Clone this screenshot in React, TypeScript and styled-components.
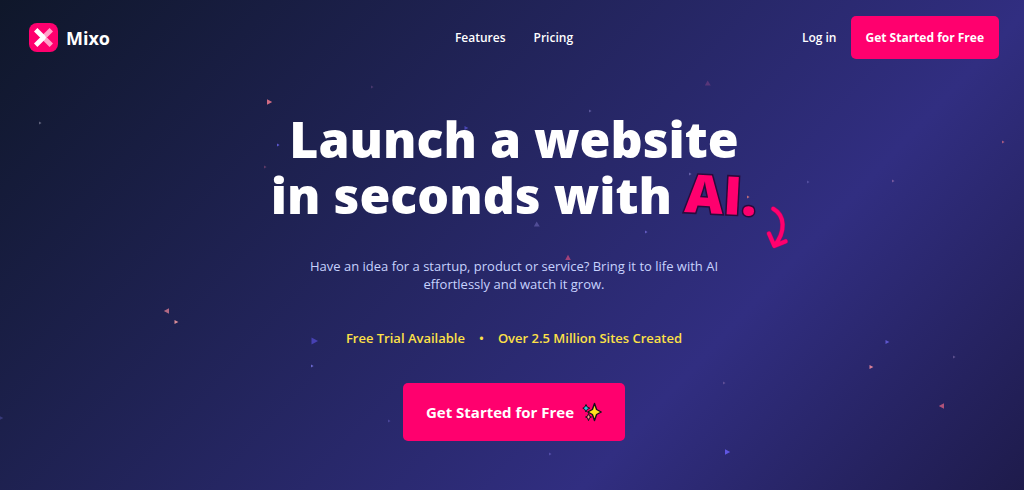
import React from "react";
import styled, { createGlobalStyle } from "styled-components";

const GlobalStyle = createGlobalStyle`
  * { box-sizing: border-box; }
  body {
    margin: 0;
    background: #1e1b4b;
    font-family: "Open Sans", "Noto Sans", sans-serif;
    font-size: 13px;
    line-height: 18px;
    color: #fff;
  }
`;

const Page = styled.div`
  position: relative;
  min-height: 100vh;
  padding: 16px 25px 48px 29px;
  overflow: hidden;
  background: linear-gradient(133deg, #0f172a 0%, #312e81 70%, #1e1b4b 100%);
`;

const Particles = styled.svg`
  position: absolute;
  inset: 0;
  width: 100%;
  height: 100%;
`;

const Header = styled.header`
  position: relative;
  display: grid;
  grid-template-columns: 1fr auto 1fr;
  align-items: center;
`;

const Brand = styled.a`
  display: flex;
  align-items: center;
  gap: 8px;
  justify-self: start;
  color: #fff;
  font-size: 18px;
  font-weight: 700;
  text-decoration: none;
`;

const Nav = styled.nav`
  display: flex;
  gap: 28px;
`;

const NavLink = styled.a`
  color: #fff;
  font-size: 12px;
  font-weight: 600;
  text-decoration: none;
`;

const Actions = styled.div`
  display: flex;
  align-items: center;
  justify-self: end;
  gap: 14px;
`;

const Button = styled.button<{ $large?: boolean }>`
  display: inline-flex;
  align-items: center;
  gap: 8px;
  padding: ${(p) => (p.$large ? "0 23px" : "0 15px")};
  height: ${(p) => (p.$large ? "58px" : "43px")};
  border: 0;
  border-radius: 5px;
  background: #ff006e;
  color: #fff;
  font-family: inherit;
  font-size: ${(p) => (p.$large ? "15px" : "12px")};
  font-weight: 700;
  white-space: nowrap;
  cursor: pointer;
`;

const Hero = styled.main`
  position: relative;
  display: flex;
  flex-direction: column;
  align-items: center;
  padding-top: 53px;
  text-align: center;
`;

const Title = styled.h1`
  margin: 0 0 34px;
  font-size: 50px;
  line-height: 55px;
  font-weight: 800;
`;

const Accent = styled.span`
  position: relative;
  display: inline-block;
  color: #ff006e;
  font-size: 53px;
  line-height: 53px;
  -webkit-text-stroke: 3px #2a0a3c;
  paint-order: stroke fill;
  transform: rotate(3deg);
`;

const Arrow = styled.svg`
  position: absolute;
  left: 100%;
  top: 36px;
  margin-left: 11px;
`;

const Lead = styled.p`
  max-width: 420px;
  margin: 0 0 36px;
  color: #c7d2fe;
`;

const Facts = styled.ul`
  display: flex;
  gap: 14px;
  margin: 0 0 36px;
  padding: 0;
  list-style: none;
  color: #fde047;
  font-weight: 600;
`;

const LogoMark = () => (
  <svg width="29" height="29" viewBox="0 0 29 29" aria-hidden="true">
    <rect width="29" height="29" rx="8" fill="#ff006e" />
    <g fill="none" strokeWidth="4.8" strokeLinejoin="round">
      <path d="M22.300 6.700 14.500 14.500 22.300 22.300" stroke="#ffa3c9" />
      <path d="M6.700 6.700 14.500 14.500 6.700 22.300" stroke="#fff" />
    </g>
  </svg>
);

const Sparkles = () => (
  <svg width="20" height="20" viewBox="0 0 20 20" aria-hidden="true" stroke="#160d1c" strokeLinejoin="round">
    <path d="M4 2.500 5.200 5 7.800 6.200 5.200 7.400 4 10 2.800 7.400 .8 6.200 2.800 5Z" fill="#2fc3df" strokeWidth="1" />
    <path d="M6.500 11.500 7.500 14.200l2 .8-2 .8-1 2.800-1-2.800-2-.8 2-.8Z" fill="#ff9b8a" strokeWidth="1" />
    <path d="M12.500 1.500 14.600 7.500l4.600 2.500-4.600 2.500-2.100 6-2.100-6L5.800 10l4.600-2.500Z" fill="#ffe11f" strokeWidth="1.400" />
  </svg>
);

type Particle = [x: number, y: number, size: number, color: string, opacity: number, angle: number];

const particles: Particle[] = [
  [269, 102, 4, "#e5748a", 0.9, 0],
  [40, 123, 2, "#a9a9c0", 0.5, 0],
  [372, 87, 2, "#8c5c9c", 0.4, 0],
  [278, 145, 2, "#6b66f0", 0.8, 0],
  [265, 167, 2, "#8c4c78", 0.6, 0],
  [466, 128, 3, "#5a54d8", 0.7, 0],
  [590, 111, 2, "#8d86cf", 0.5, 0],
  [708, 84, 4, "#a04c8f", 0.4, 30],
  [1003, 142, 2, "#e07088", 0.7, 0],
  [690, 174, 2, "#8d86cf", 0.6, 0],
  [748, 197, 2, "#e07a78", 0.8, 0],
  [537, 225, 4, "#7a72c4", 0.5, 30],
  [646, 232, 2, "#7a72e4", 0.7, 0],
  [568, 258, 4, "#c0487c", 0.8, -90],
  [808, 182, 2, "#7a72c4", 0.5, 0],
  [893, 181, 2, "#a878b4", 0.6, 0],
  [167, 311, 4, "#c2718a", 0.9, 180],
  [176, 322, 3, "#f09aa0", 0.9, 0],
  [314, 341, 5, "#5048c8", 0.8, 0],
  [312, 366, 2, "#7c78e8", 0.8, 0],
  [1, 418, 3, "#4a4a98", 0.6, 0],
  [887, 342, 3, "#6c64e8", 0.8, 0],
  [871, 367, 3, "#ee8b9c", 0.9, 0],
  [954, 357, 2, "#6c5c98", 0.8, 0],
  [942, 406, 4, "#c0587c", 0.9, 180],
  [727, 452, 4, "#665cf0", 0.9, 0],
  [724, 383, 2, "#8068a8", 0.6, 0],
  [550, 454, 2, "#6c64c8", 0.6, 0],
  [389, 421, 2, "#6c64c8", 0.5, 0],
];

const Starfield = () => (
  <Particles viewBox="0 0 1024 490" preserveAspectRatio="xMidYMin slice" aria-hidden="true">
    {particles.map(([x, y, size, color, opacity, angle]) => (
      <path
        key={`${x}-${y}`}
        d={`M${-size / 2} ${-size * 0.7}L${size * 0.8} 0L${-size / 2} ${size * 0.7}Z`}
        transform={`translate(${x} ${y}) rotate(${angle})`}
        fill={color}
        opacity={opacity}
      />
    ))}
  </Particles>
);

export default function App() {
  return (
    <>
      <GlobalStyle />
      <Page>
        <Starfield />
        <Header>
          <Brand href="#">
            <LogoMark />
            Mixo
          </Brand>
          <Nav aria-label="Main">
            <NavLink href="#features">Features</NavLink>
            <NavLink href="#pricing">Pricing</NavLink>
          </Nav>
          <Actions>
            <NavLink href="#login">Log in</NavLink>
            <Button type="button">Get Started for Free</Button>
          </Actions>
        </Header>
        <Hero>
          <Title>
            Launch a website
            <br />
            in seconds with{" "}
            <Accent>
              AI.
              <Arrow width="24" height="44" viewBox="0 0 24 44" fill="none" strokeLinecap="round" strokeLinejoin="round" aria-hidden="true">
                <path d="M6 3C18 9 20 25 9 40M3 28 9 40 20 35" stroke="#8c0f68" strokeWidth="5" />
                <path d="M6 3C18 9 20 25 9 40M3 28 9 40 20 35" stroke="#ff006e" strokeWidth="4" />
              </Arrow>
            </Accent>
          </Title>
          <Lead>
            Have an idea for a startup, product or service? Bring it to life with AI effortlessly and watch it grow.
          </Lead>
          <Facts>
            <li>Free Trial Available</li>
            <li aria-hidden="true">•</li>
            <li>Over 2.5 Million Sites Created</li>
          </Facts>
          <Button type="button" $large>
            Get Started for Free
            <Sparkles />
          </Button>
        </Hero>
      </Page>
    </>
  );
}
